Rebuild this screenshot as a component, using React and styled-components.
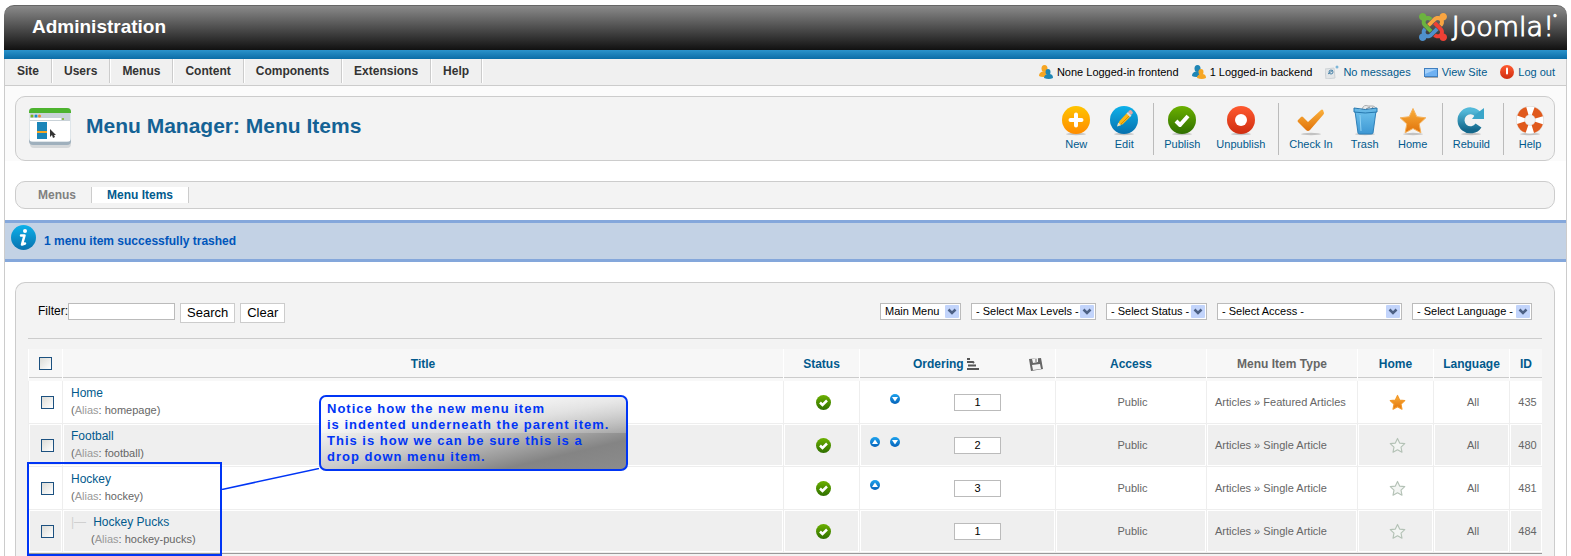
import { useState } from "react";
import styled, { createGlobalStyle } from "styled-components";

const GlobalStyle = createGlobalStyle`
  * {
    box-sizing: border-box;
  }

  body {
    margin: 0;
    background: #fff;
    color: #000;
    font-family: "Liberation Sans", Arial, sans-serif;
    font-size: 11px;
  }

  a {
    color: #025a8d;
    text-decoration: none;
  }

  button, input, select {
    font-family: inherit;
  }

  svg {
    display: block;
    flex: none;
  }
`;

const menuLinks = [
  "Site",
  "Users",
  "Menus",
  "Content",
  "Components",
  "Extensions",
  "Help",
];

const toolbarGroups = [
  ["New", "Edit"],
  ["Publish", "Unpublish"],
  ["Check In", "Trash", "Home"],
  ["Rebuild"],
  ["Help"],
];

const filters = [
  { label: "Menu", text: "Main Menu", width: 81 },
  { label: "Max levels", text: "- Select Max Levels -", width: 125 },
  { label: "Status", text: "- Select Status -", width: 101 },
  { label: "Access", text: "- Select Access -", width: 185 },
  { label: "Language", text: "- Select Language -", width: 120 },
];

const items = [
  { id: 435, title: "Home", alias: "homepage", order: 1, down: true, type: "Featured Articles", home: true },
  { id: 480, title: "Football", alias: "football", order: 2, up: true, down: true, type: "Single Article" },
  { id: 481, title: "Hockey", alias: "hockey", order: 3, up: true, type: "Single Article" },
  { id: 484, title: "Hockey Pucks", alias: "hockey-pucks", order: 1, type: "Single Article", child: true },
];

/* ---------- icons ---------- */

const JoomlaMark = () => (
  <svg width="28" height="30" viewBox="0 30 448 452">
    <path fill="#6cb33f" d="M.6 92.1C.6 58.8 27.4 32 60.4 32c30 0 54.5 21.9 59.2 50.2 32.6-7.6 67.1.6 96.5 30l-44.3 44.3c-20.5-20.5-42.6-16.3-55.4-3.5-14.3 14.3-14.3 37.9 0 52.2l99.5 99.5-44 44.3c-87.7-87.2-49.7-49.7-99.8-99.7-26.8-26.5-35-64.8-24.8-98.9C20.4 144.6.6 120.7.6 92.1z" />
    <path fill="#f9a541" d="M130.1 208.5l44.3 44.3c10-10 89.7-89.7 99.7-99.8 14.3-14.3 37.6-14.3 51.9 0 12.8 12.8 17 35-3.5 55.4l44 44.3c31.2-31.2 38.5-67.6 28.9-101.2 29.2-4.1 51.9-29.2 51.9-59.5 0-33.2-26.8-60.1-59.8-60.1-30.3 0-55.4 22.5-59.5 51.6-33.8-9.9-71.7-1.5-98.3 25.1-18.3 19.1-71.1 71.5-99.6 99.9z" />
    <path fill="#ee4035" d="M396.4 360.7c8.2-32.7-.9-68.5-26.3-93.9-11.8-12.2 5 4.7-99.5-99.7l-44.3 44.3 99.7 99.7c14.3 14.3 14.3 37.6 0 51.9-12.8 12.8-35 17-55.4-3.5l-44 44.3c27.6 30.2 68 38.8 102.7 28 5.5 27.4 29.7 48.1 58.9 48.1 33 0 59.8-26.8 59.8-60.1 0-30.2-22.5-55-51.6-59.1z" />
    <path fill="#4f91cd" d="M312.1 307.6l-44-44.3c-87 86.4-50.4 50.4-99.7 99.8-14.3 14.3-37.6 14.3-51.9 0-13.1-13.4-16.9-35.3 3.2-55.4l-44-44.3c-30.2 30.2-38 65.2-29.5 98.3-26.7 6-46.2 29.9-46.2 58.2C0 453.2 26.8 480 59.8 480c28.6 0 52.5-19.8 58.6-46.7 32.7 8.2 68.5-.6 94.2-26 32.1-32 12.2-12.4 99.5-99.7z" />
  </svg>
);

const HiddenSvg = styled.svg`
  position: absolute;
`;

const Gradients = () => (
  <HiddenSvg width="0" height="0" aria-hidden="true">
    <defs>
      {[
        ["gYellow", "#ffc400", "#ff8c00"],
        ["gBlue", "#0db1ea", "#0871ae"],
        ["gGreen", "#6bb000", "#2f6f00"],
        ["gRed", "#ff5a30", "#cf2d10"],
        ["gOrange", "#fbb03b", "#e0720a"],
        ["gBin", "#6cc0ec", "#3d97d3"],
        ["gSteel", "#53b9d9", "#14688c"],
        ["gArrow", "#1ea3ee", "#0561b8"],
      ].map(([id, from, to]) => (
        <linearGradient key={id} id={id} x1="0" y1="0" x2="0" y2="1">
          <stop offset="0" stopColor={from} />
          <stop offset="1" stopColor={to} />
        </linearGradient>
      ))}
    </defs>
  </HiddenSvg>
);

const STAR = "M16 4.5l3.8 8.2 9 1.1-6.6 6.1 1.7 8.9-7.9-4.3-7.9 4.3 1.7-8.9-6.6-6.1 9-1.1z";

const glyphs = {
  New: (
    <>
      <circle cx="16" cy="16" r="14" fill="url(#gYellow)" />
      <path d="M16 10.500v11M10.500 16h11" stroke="#fff" strokeWidth="4" strokeLinecap="round" />
    </>
  ),
  Edit: (
    <>
      <circle cx="16" cy="16" r="14" fill="url(#gBlue)" />
      <path d="M10 21l1.500-4 8-8.500 3.500 3.500-8.500 8.500z" fill="#fdb813" />
      <path d="M13 20l9-9" stroke="#d98a00" />
      <path d="M20 8l1.500-1.500q1-1 2.500.5t.5 2.500L23 11z" fill="#e3a6a0" />
      <path d="M18.500 9.500L20 8l3.500 3.500L22 13z" fill="#d5dbe0" />
      <path d="M9 22.500l1.200-4 2.800 2.800z" fill="#f4e3bd" />
    </>
  ),
  Publish: (
    <>
      <circle cx="16" cy="16" r="14" fill="url(#gGreen)" />
      <path d="M10 17l4 4 8-9" fill="none" stroke="#fff" strokeWidth="4" strokeLinejoin="round" />
    </>
  ),
  Unpublish: (
    <>
      <circle cx="16" cy="16" r="14" fill="url(#gRed)" />
      <circle cx="16" cy="16" r="6" fill="#fff" />
    </>
  ),
  "Check In": (
    <path d="M3 16l3-3q1-1 2 0l5 5L26 6q1-1 2 0l1 3q0 1-1 2L15 26q-2 2-4 0L3 18q-1-1 0-2z" fill="url(#gOrange)" />
  ),
  Trash: (
    <>
      <path d="M13 5q2-5 6-3l5 0q4 1 2 5l-13 1z" fill="#e7e9ea" stroke="#a9adb0" />
      <path d="M17 5l4-2M22 6l2-3" stroke="#8c9094" />
      <path d="M6 7h21l-3 22q0 1-2 1H11q-2 0-2-1z" fill="url(#gBin)" stroke="#2f80b8" />
      <path d="M5 4q11 3 23 0v4q-12 2-23 0z" fill="#64b7e6" stroke="#2577ae" />
      <path d="M11 11l1 16" stroke="#8fd2f5" />
    </>
  ),
  Home: <path d={STAR} fill="url(#gOrange)" stroke="#f5b25c" strokeLinejoin="round" />,
  Rebuild: (
    <>
      <path d="M23 10.500A9.500 9.500 0 1 0 23.500 21.500" fill="none" stroke="url(#gSteel)" strokeWidth="7" />
      <path d="M17 15h12V4l-4 3-5 4z" fill="#3aa5c9" />
    </>
  ),
  Help: (
    <>
      <circle cx="16" cy="16" r="9.500" fill="none" stroke="#d4d0cc" strokeWidth="9" />
      <circle cx="16" cy="16" r="9.500" fill="none" stroke="#fff" strokeWidth="8" />
      <circle cx="16" cy="16" r="9.500" fill="none" stroke="#e05a1d" strokeWidth="8" strokeDasharray="8.920 6" strokeDashoffset="-3" />
    </>
  ),
};

const ToolIcon = ({ name }) => (
  <svg width="32" height="32" viewBox="0 0 32 32">
    <ellipse cx="16" cy="30" rx="10" ry="1.200" fill="#000" opacity="0.2" />
    {glyphs[name]}
  </svg>
);

const MenuManagerIcon = () => (
  <svg width="44" height="42" viewBox="0 0 44 42">
    <rect x="2" y="3" width="41" height="38" rx="4" fill="#d5d8da" />
    <rect x="1" y="1" width="42" height="37" rx="4" fill="#9fb0bd" />
    <rect x="1" y="1" width="42" height="34" rx="4" fill="#dfe6ea" />
    <path d="M1 6V5q0-4 4-4h34q4 0 4 4v1z" fill="#4db32e" />
    <rect x="2" y="6" width="40" height="8" fill="#c9d2d8" />
    <circle cx="4" cy="9" r="1.500" fill="#79b51c" />
    <circle cx="8" cy="9" r="1.500" fill="#1b8cc4" />
    <circle cx="11.500" cy="9" r="1.500" fill="#f08a2c" />
    <rect x="2" y="11" width="31" height="2" fill="#fff" />
    <circle cx="35" cy="12" r="1" fill="#79b51c" />
    <rect x="2" y="14" width="40" height="20" fill="#fff" />
    <rect x="9" y="15" width="10" height="17" fill="#1a85b8" />
    <rect x="9" y="24" width="10" height="2" fill="#f5a623" />
    <path d="M22 22v8l2-2 1 3 2-1-1-2h2z" fill="#333" />
  </svg>
);

const UsersIcon = ({ front = "#1f86b5", back = "#f6a623" }) => (
  <svg width="14" height="14" viewBox="0 0 14 14">
    <ellipse cx="5.500" cy="3.500" rx="3" ry="3.500" fill={back} />
    <path d="M0 11q0-4 4-4.500h3l1 5q-5 1-8-.5z" fill={back} />
    <ellipse cx="9" cy="7" rx="2.500" ry="3" fill={front} />
    <path d="M5 13q0-3.500 4.500-4t4.500 4q-4 2-9 0z" fill={front} />
  </svg>
);

const MailIcon = () => (
  <svg width="14" height="14" viewBox="0 0 14 14">
    <path d="M0 4l9-1 1 10-9 1z" fill="#e3e6e8" stroke="#cdd2d6" />
    <circle cx="6" cy="7" r="2" fill="none" stroke="#4a83a8" />
    <path d="M3 9l5-4" stroke="#4a83a8" />
    <circle cx="12" cy="2" r="1.500" fill="#7db6d8" />
  </svg>
);

const ScreenIcon = () => (
  <svg width="14" height="14" viewBox="0 0 14 14">
    <rect x="0.500" y="3.500" width="13" height="8" fill="#6fb1f2" stroke="#3f7fc0" />
    <path d="M1 4h12L1 9z" fill="#a3d0fa" />
    <path d="M1 12.500h13" stroke="#a8a8a8" />
  </svg>
);

const PowerIcon = () => (
  <svg width="14" height="14" viewBox="0 0 14 14">
    <circle cx="7" cy="7" r="7" fill="url(#gRed)" />
    <path d="M7 3.500v5" stroke="#fff" strokeWidth="2" strokeLinecap="round" />
  </svg>
);

const InfoIcon = () => (
  <svg width="25" height="25" viewBox="0 0 25 25">
    <circle cx="12.500" cy="12.500" r="12.500" fill="url(#gBlue)" />
    <circle cx="14" cy="6" r="2" fill="#fff" />
    <path d="M10 10.500h3.500l-2.500 9 3-1" fill="none" stroke="#fff" strokeWidth="2.500" strokeLinejoin="round" strokeLinecap="round" />
  </svg>
);

const TickIcon = () => (
  <svg width="15" height="15" viewBox="0 0 15 15">
    <circle cx="7.500" cy="7.500" r="7.500" fill="url(#gGreen)" />
    <path d="M4 7.500l2.500 2.500 4.500-4.500" fill="none" stroke="#fff" strokeWidth="2.500" />
  </svg>
);

const ArrowIcon = ({ up }) => (
  <svg width="10" height="10" viewBox="0 0 10 10">
    <circle cx="5" cy="5" r="5" fill="url(#gArrow)" />
    <path d={up ? "M2 7h6L5 2.500z" : "M2 3h6L5 7.500z"} fill="#fff" />
  </svg>
);

const StarIcon = ({ on }) => (
  <svg width="17" height="17" viewBox="1 2 30 30">
    <path d={STAR} fill={on ? "url(#gOrange)" : "#f3f5f3"} stroke={on ? "#f39a2b" : "#b4c2b6"} strokeWidth="2" strokeLinejoin="round" />
  </svg>
);

const SortIcon = () => (
  <svg width="12" height="12" viewBox="0 0 12 12">
    <path d="M0 1h3M0 4h6l1 1M1 7.500h8M0 11h12" stroke="#555" strokeWidth="2" fill="none" />
  </svg>
);

const SaveIcon = () => (
  <svg width="14" height="14" viewBox="0 0 14 14">
    <path d="M0 2l12-1 2 11-12 2z" fill="#666" />
    <path d="M3 2l6-1v4l-5 1zM3 8l8-1 1 5-8 1z" fill="#f4f4f4" />
    <path d="M7 2v3" stroke="#666" />
  </svg>
);

/* ---------- layout ---------- */

const Page = styled.div`
  display: flex;
  flex-direction: column;
  min-height: 100vh;
  padding: 5px 4px 0;
`;

const Header = styled.header`
  display: flex;
  align-items: center;
  justify-content: space-between;
  height: 45px;
  padding: 0 10px 2px 28px;
  border-top: 1px solid #666;
  border-radius: 10px 10px 0 0;
  background: linear-gradient(#8a8a8a, #111);
  color: #fff;
`;

const SiteTitle = styled.h1`
  margin: 0;
  font-size: 19px;
  line-height: 24px;
`;

const Brand = styled.div`
  display: flex;
  align-items: center;
  gap: 5px;
  font-family: "DejaVu Sans", sans-serif;
  font-size: 27px;
  font-weight: 200;
  line-height: 30px;
  -webkit-text-stroke: 1px #fff;

  sup {
    align-self: flex-start;
    margin-left: -6px;
    font-size: 8px;
    line-height: 14px;
  }
`;

const BlueStripe = styled.div`
  height: 9px;
  background: linear-gradient(#2b93cb, #0b6ca6);
`;

const Frame = styled.div`
  display: flex;
  flex: 1;
  flex-direction: column;
  border: solid #ccc;
  border-width: 0 1px;
`;

const TopBar = styled.div`
  display: flex;
  justify-content: space-between;
  height: 27px;
  border-bottom: 1px solid #ccc;
  background: #f0f0f0;
`;

const MainNav = styled.nav`
  display: flex;
  padding-bottom: 2px;
`;

const NavLink = styled.a`
  padding: 0 12px;
  border-right: 1px solid #ccc;
  color: #333;
  font-size: 12px;
  font-weight: bold;
  line-height: 24px;
  box-shadow: 1px 0 #fff;
`;

const StatusBar = styled.div`
  display: flex;
  align-items: center;
  gap: 13px;
  padding-right: 11px;
`;

const StatusItem = styled.span`
  display: flex;
  align-items: center;
  gap: 4px;
  line-height: 14px;
`;

const HeadArea = styled.div`
  padding: 10px 11px 0 10px;
  background: #fbfbfb;
`;

const Content = styled.div`
  padding: 20px 11px 0 10px;
`;

const Panel = styled.section`
  border: 1px solid #ccc;
  border-radius: 10px;
  background: #f3f3f3;
`;

const TitlePanel = styled(Panel)`
  display: flex;
  align-items: center;
  justify-content: space-between;
  height: 65px;
`;

const PageTitle = styled.div`
  display: flex;
  gap: 14px;
  padding: 0 0 2px 12px;

  h2 {
    margin: 0;
    color: #146295;
    font-size: 21px;
    line-height: 38px;
  }
`;

const Toolbar = styled.div`
  display: flex;
`;

const ToolGroup = styled.div`
  display: flex;
  height: 52px;

  & + & {
    margin-left: 5px;
    padding-left: 2px;
    border-left: 1px solid #bbb;
  }
`;

const ToolButton = styled.button`
  display: flex;
  flex-direction: column;
  align-items: center;
  padding: 1px 8px 0;
  border: 0;
  background: none;
  color: #025a8d;
  font-size: 11px;
  line-height: 16px;
`;

const SubMenu = styled(Panel)`
  display: flex;
  align-items: center;
  height: 28px;
  padding: 0 7px;
`;

const SubLink = styled.a`
  padding: 0 15px;
  font-size: 12px;
  font-weight: bold;
  line-height: 16px;
  color: ${({ $active }) => ($active ? "#025a8d" : "#808080")};
  background: ${({ $active }) => ($active ? "#fff" : "none")};
  border: solid #ccc;
  border-width: ${({ $active }) => ($active ? "0 1px" : "0")};
`;

const Message = styled.div`
  display: flex;
  gap: 8px;
  height: 42px;
  margin-top: 11px;
  padding: 2px 6px;
  border: solid #84a7db;
  border-width: 3px 0;
  background: #c3d2e5;
  color: #05b;
  font-size: 12px;
  font-weight: bold;
  line-height: 32px;
`;

const ListArea = styled(Content)`
  display: flex;
  flex: 1;
  flex-direction: column;
`;

const ListPanel = styled(Panel)`
  flex: 1;
  padding: 20px 12px 0;
  border-bottom: 0;
  border-radius: 10px 10px 0 0;
`;

const FilterBar = styled.form`
  display: flex;
  justify-content: space-between;
  align-items: flex-start;
  height: 36px;
  padding: 0 10px;
  margin-bottom: 10px;
  border-bottom: 1px solid #ccc;
`;

const FilterSearch = styled.div`
  display: flex;
  gap: 5px;

  label {
    display: flex;
    font-size: 12px;
    line-height: 16px;
  }
`;

const FilterInput = styled.input`
  width: 107px;
  height: 17px;
  border: 1px solid #bbb;
  background: #fff;
  font-size: 11px;
`;

const FilterButton = styled.button`
  height: 20px;
  padding: 0 6px;
  border: 1px solid #ccc;
  background: #fff;
  font-size: 13px;
  line-height: 18px;
`;

const FilterSelects = styled.div`
  display: flex;
  gap: 10px;
`;

const SelectBox = styled.span`
  position: relative;
  width: ${({ $width }) => $width}px;

  select {
    display: block;
    width: 100%;
    height: 17px;
    padding: 0 16px 0 4px;
    border: 1px solid #bbb;
    border-radius: 0;
    background: #fff;
    color: #000;
    font-size: 11px;
    line-height: 15px;
    appearance: none;
  }

  svg {
    position: absolute;
    top: 2px;
    right: 2px;
    pointer-events: none;
  }
`;

const TableWrap = styled.div`
  position: relative;
`;

const Table = styled.table`
  width: 100%;
  border-collapse: separate;
  border-spacing: 0;
  border-bottom: 1px solid #999;
  table-layout: fixed;
  color: #666;
`;

const Th = styled.th`
  width: ${({ $width }) => ($width ? `${$width}px` : "auto")};
  height: 32px;
  padding: 0;
  border-bottom: 3px solid #f8f8f8;
  border-left: 1px solid #fff;
  background: #f7f7f7;
  box-shadow: inset 0 -1px #ccc;
  color: ${({ $plain }) => ($plain ? "#666" : "#025a8d")};
  font-size: 12px;
`;

const OrderHead = styled.div`
  display: flex;
  align-items: center;
  gap: 3px;
  padding: 0 12px 0 53px;
`;

const SaveButton = styled.button`
  margin-left: auto;
  padding: 0;
  border: 0;
  background: none;
`;

const Row = styled.tr`
  background: #fff;

  &:nth-child(even) {
    background: #efefef;
  }
`;

const Td = styled.td`
  height: 43px;
  padding: ${({ $left }) => ($left ? "0 8px" : "0 0 0 3px")};
  border-bottom: 1px solid #eee;
  border-left: 1px solid #eee;
  box-shadow: inset 0 0 0 1px #fff;
  text-align: ${({ $left }) => ($left ? "left" : "center")};
  white-space: nowrap;

  & > svg {
    margin: 0 auto;
  }
`;

const Check = styled.input`
  display: block;
  width: 13px;
  height: 13px;
  margin: 0 auto;
  border: 1px solid #1c5180;
  background: linear-gradient(135deg, #dcdcd7, #fff);
  appearance: none;

  &:checked {
    background: #1c5180;
  }
`;

const ItemTitle = styled.div`
  display: flex;
  gap: 7px;
  font-size: 12px;
  line-height: 17px;
`;

const Branch = styled.span`
  color: #d0d0d0;
`;

const Alias = styled.div`
  padding-left: ${({ $child }) => ($child ? "20px" : "0")};
  line-height: 17px;

  span {
    color: #999;
  }
`;

const OrderCell = styled.div`
  display: grid;
  grid-template-columns: 20px 20px 47px;
  align-items: center;
  justify-items: center;
  padding-left: 2px;
`;

const ArrowButton = styled.button`
  grid-column: ${({ $up }) => ($up ? 1 : 2)};
  grid-row: 1;
  padding: 0 0 6px;
  border: 0;
  background: none;
`;

const OrderInput = styled.input`
  grid-column: 3;
  grid-row: 1;
  width: 47px;
  height: 17px;
  margin-left: 98px;
  padding: 0;
  border: 1px solid #bbb;
  background: #fff;
  color: #000;
  font-size: 11px;
  text-align: center;
`;

/* ---------- annotation on top of the list ---------- */

const Highlight = styled.div`
  position: absolute;
  left: -1px;
  bottom: -2px;
  width: 195px;
  height: 94px;
  border: 2px solid #0035f5;
  pointer-events: none;
`;

const Connector = styled.svg`
  position: absolute;
  left: 194px;
  bottom: 64px;
  pointer-events: none;
`;

const Callout = styled.div`
  position: absolute;
  left: 291px;
  top: 46px;
  width: 309px;
  padding: 4px 6px;
  border: 2px solid #0035f5;
  border-radius: 7px;
  background:
    linear-gradient(rgba(255, 255, 255, 0.6), rgba(255, 255, 255, 0.2)) top / 100% 50% no-repeat,
    linear-gradient(to bottom right, #fff 15%, #ccc 50%, #848484 80%, #8c8c8c);
  color: #0035f5;
  font-size: 13px;
  font-weight: bold;
  letter-spacing: 1px;
  line-height: 16px;
  white-space: nowrap;
`;

/* ---------- components ---------- */

const TopNavigation = () => (
  <TopBar>
    <MainNav>
      {menuLinks.map((link) => (
        <NavLink key={link} href="#">
          {link}
        </NavLink>
      ))}
    </MainNav>
    <StatusBar>
      <StatusItem>
        <UsersIcon />
        None Logged-in frontend
      </StatusItem>
      <StatusItem>
        <UsersIcon front="#f6a623" back="#1f86b5" />1 Logged-in backend
      </StatusItem>
      <StatusItem as="a" href="#">
        <MailIcon />
        No messages
      </StatusItem>
      <StatusItem as="a" href="#">
        <ScreenIcon />
        View Site
      </StatusItem>
      <StatusItem as="a" href="#">
        <PowerIcon />
        Log out
      </StatusItem>
    </StatusBar>
  </TopBar>
);

const Filters = () => (
  <FilterBar onSubmit={(e) => e.preventDefault()}>
    <FilterSearch>
      <label>
        Filter:
        <FilterInput type="text" name="search" />
      </label>
      <FilterButton type="submit">Search</FilterButton>
      <FilterButton type="reset">Clear</FilterButton>
    </FilterSearch>
    <FilterSelects>
      {filters.map(({ label, text, width }) => (
        <SelectBox key={label} $width={width}>
          <select aria-label={label}>
            <option>{text}</option>
          </select>
          <svg width="14" height="13" viewBox="0 0 14 13">
            <rect width="14" height="13" rx="1" fill="#c2d4fb" />
            <path d="M3.500 4.500L7 8l3.500-3.500" fill="none" stroke="#4d6185" strokeWidth="2.500" />
          </svg>
        </SelectBox>
      ))}
    </FilterSelects>
  </FilterBar>
);

const ItemRow = ({ item, checked, onToggle }) => (
  <Row>
    <Td>
      <Check
        type="checkbox"
        aria-label={`Select ${item.title}`}
        checked={checked}
        onChange={() => onToggle(item.id)}
      />
    </Td>
    <Td $left>
      <ItemTitle>
        {item.child && <Branch>|—</Branch>}
        <a href="#">{item.title}</a>
      </ItemTitle>
      <Alias $child={item.child}>
        (<span>Alias</span>: {item.alias})
      </Alias>
    </Td>
    <Td>
      <TickIcon />
    </Td>
    <Td>
      <OrderCell>
        {item.up && (
          <ArrowButton $up aria-label="Move up">
            <ArrowIcon up />
          </ArrowButton>
        )}
        {item.down && (
          <ArrowButton aria-label="Move down">
            <ArrowIcon />
          </ArrowButton>
        )}
        <OrderInput type="text" aria-label="Order" defaultValue={item.order} />
      </OrderCell>
    </Td>
    <Td>Public</Td>
    <Td $left>Articles » {item.type}</Td>
    <Td>
      <StarIcon on={item.home} />
    </Td>
    <Td>All</Td>
    <Td>{item.id}</Td>
  </Row>
);

const App = () => {
  const [selected, setSelected] = useState([]);

  const toggle = (id) =>
    setSelected((prev) =>
      prev.includes(id) ? prev.filter((x) => x !== id) : [...prev, id]
    );

  const allSelected = selected.length === items.length;

  return (
    <Page>
      <GlobalStyle />
      <Gradients />
      <Header>
        <SiteTitle>Administration</SiteTitle>
        <Brand>
          <JoomlaMark />
          Joomla!
          <sup>°</sup>
        </Brand>
      </Header>
      <BlueStripe />
      <Frame>
        <TopNavigation />
        <HeadArea>
          <TitlePanel>
            <PageTitle>
              <MenuManagerIcon />
              <h2>Menu Manager: Menu Items</h2>
            </PageTitle>
            <Toolbar>
              {toolbarGroups.map((group) => (
                <ToolGroup key={group[0]}>
                  {group.map((name) => (
                    <ToolButton key={name}>
                      <ToolIcon name={name} />
                      {name}
                    </ToolButton>
                  ))}
                </ToolGroup>
              ))}
            </Toolbar>
          </TitlePanel>
        </HeadArea>
        <Content>
          <SubMenu as="nav">
            <SubLink href="#">Menus</SubLink>
            <SubLink href="#" $active>
              Menu Items
            </SubLink>
          </SubMenu>
        </Content>
        <Message role="status">
          <InfoIcon />1 menu item successfully trashed
        </Message>
        <ListArea>
          <ListPanel>
            <Filters />
            <TableWrap>
              <Table>
                <thead>
                  <tr>
                    <Th $width={34}>
                      <Check
                        type="checkbox"
                        aria-label="Select all"
                        checked={allSelected}
                        onChange={() =>
                          setSelected(allSelected ? [] : items.map((i) => i.id))
                        }
                      />
                    </Th>
                    <Th>Title</Th>
                    <Th $width={76}>Status</Th>
                    <Th $width={196}>
                      <OrderHead>
                        Ordering
                        <SortIcon />
                        <SaveButton aria-label="Save order">
                          <SaveIcon />
                        </SaveButton>
                      </OrderHead>
                    </Th>
                    <Th $width={151}>Access</Th>
                    <Th $width={151} $plain>
                      Menu Item Type
                    </Th>
                    <Th $width={76}>Home</Th>
                    <Th $width={76}>Language</Th>
                    <Th $width={33}>ID</Th>
                  </tr>
                </thead>
                <tbody>
                  {items.map((item) => (
                    <ItemRow
                      key={item.id}
                      item={item}
                      checked={selected.includes(item.id)}
                      onToggle={toggle}
                    />
                  ))}
                </tbody>
              </Table>
              <Highlight />
              <Connector width="97" height="22" viewBox="0 0 97 22">
                <path d="M0 21.500L97 0.500" stroke="#0035f5" strokeWidth="1.500" />
              </Connector>
              <Callout>
                Notice how the new menu item
                <br />
                is indented underneath the parent item.
                <br />
                This is how we can be sure this is a
                <br />
                drop down menu item.
              </Callout>
            </TableWrap>
          </ListPanel>
        </ListArea>
      </Frame>
    </Page>
  );
};

export default App;
